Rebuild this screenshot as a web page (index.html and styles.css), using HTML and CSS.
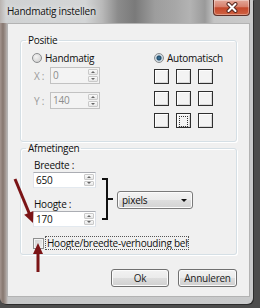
FILE: index.html
```html
<!DOCTYPE html>
<html lang="nl">
<head>
    <meta charset="UTF-8">
    <title>Handmatig instellen</title>
    <link rel="stylesheet" href="styles.css">
</head>
<body>
<div class="window">
    <div class="titlebar">
        <span class="title">Handmatig instellen</span>
        <span class="close">
            <svg width="12" height="11" viewBox="0 0 12 11">
                <path d="M2.5 2 L9.5 9 M9.5 2 L2.5 9" stroke="#5b2a22" stroke-width="4" stroke-linecap="round"/>
                <path d="M2.5 2 L9.5 9 M9.5 2 L2.5 9" stroke="#fff" stroke-width="2" stroke-linecap="round"/>
            </svg>
        </span>
    </div>
    <div class="client">
        <fieldset class="group">
            <legend>Positie</legend>
            <div class="pos">
                <div class="pos-left">
                    <div class="radio-row"><span class="radio"></span>Handmatig</div>
                    <div class="coord first">
                        <span class="coord-label">X :</span>
                        <div class="spin disabled xy">
                            <span class="spin-value">0</span>
                            <span class="spin-btns"><span class="up"></span><span class="down"></span></span>
                        </div>
                    </div>
                    <div class="coord">
                        <span class="coord-label">Y :</span>
                        <div class="spin disabled xy">
                            <span class="spin-value">140</span>
                            <span class="spin-btns"><span class="up"></span><span class="down"></span></span>
                        </div>
                    </div>
                </div>
                <div class="pos-right">
                    <div class="radio-row"><span class="radio checked"></span>Automatisch</div>
                    <div class="anchor-grid">
                        <span class="cell"></span><span class="cell"></span><span class="cell"></span>
                        <span class="cell"></span><span class="cell"></span><span class="cell"></span>
                        <span class="cell"></span><span class="cell focus"></span><span class="cell"></span>
                    </div>
                </div>
            </div>
        </fieldset>
        <fieldset class="group">
            <legend>Afmetingen</legend>
            <div class="size">
                <div class="size-row">
                    <div class="size-fields">
                        <div class="field-label">Breedte :</div>
                        <div class="spin wh">
                            <span class="spin-value">650</span>
                            <span class="spin-btns"><span class="up"></span><span class="down"></span></span>
                        </div>
                        <div class="field-label second">Hoogte :</div>
                        <div class="spin wh">
                            <span class="spin-value">170</span>
                            <span class="spin-btns"><span class="up"></span><span class="down"></span></span>
                        </div>
                    </div>
                    <div class="bracket"></div>
                    <div class="select">
                        <span>pixels</span>
                        <span class="select-arrow"></span>
                    </div>
                </div>
                <div class="check-row">
                    <span class="checkbox"></span>
                    <span class="check-text">Hoogte/breedte-verhouding behouden</span>
                </div>
            </div>
        </fieldset>
        <div class="buttons">
            <button type="button" class="btn ok">Ok</button>
            <button type="button" class="btn">Annuleren</button>
        </div>
    </div>
    <!-- rode pijlen over het dialoog -->
    <svg class="arrows" width="260" height="308" viewBox="0 0 260 308">
        <path d="M15 179 L29.5 214" stroke="#7b1416" stroke-width="3"/>
        <path d="M33 223 L33.4 210.9 L24.2 214.7 Z" fill="#7b1416"/>
        <path d="M38 272 L38 252" stroke="#7b1416" stroke-width="3"/>
        <path d="M38 243 L43 254 L33 254 Z" fill="#7b1416"/>
    </svg>
</div>
</body>
</html>
```

FILE: styles.css
```css
* {
    box-sizing: border-box;
}
body {
    margin: 0;
    width: 260px;
    height: 308px;
    overflow: hidden;
    background: #4c4c4c;
    font-family: "Open Sans", "Noto Sans", sans-serif;
    font-size: 10px;
    letter-spacing: -0.25px;
    color: #0e0e0e;
}
.window {
    position: relative;
    width: 253px;
    height: 304px;
    padding-bottom: 7px;
    display: flex;
    flex-direction: column;
    border-radius: 0 0 6px 6px;
    background: linear-gradient(90deg, #a4958f 0, #86776f 3px, #a89f9b 6px, #c6c7c8 8px, #c9cacb 100%);
    box-shadow: 1px 1px 0 #2c2c2c;
}
.titlebar {
    height: 23px;
    padding: 0 3px 0 7px;
    display: flex;
    justify-content: space-between;
    background: linear-gradient(90deg, #b9b3b0 0, #d0d2d3 6px, #d3d5d6 85px, #b9b9b9 102px, #8b8b8b 118px, #7a7a7a 135px, #9d9d9d 155px, #a7a7a7 175px, #b3b3b3 190px, #9a9a9a 205px, #c4c4c4 214px, #cbcbcb 100%);
}
.title {
    line-height: 23px;
    font-size: 10px;
    color: #111;
    text-shadow: 0 0 6px #fff;
}
.close {
    width: 37px;
    height: 16px;
    display: flex;
    align-items: center;
    justify-content: center;
    border: 1px solid #5e3028;
    border-top: 0;
    border-radius: 0 0 4px 4px;
    background: linear-gradient(#e3a899 0, #d7806c 45%, #c4482b 52%, #cf6242 100%);
    box-shadow: inset 0 0 0 1px rgba(255, 255, 255, 0.35);
}
.client {
    flex: 1;
    margin: 0 3px 0 7px;
    padding: 10px 12px 0 12px;
    background: #f0f0f0;
    border: 1px solid #b3b3b3;
}
.group {
    margin: 0;
    padding: 0;
    min-width: 0;
    border: 1px solid #d5dfe5;
    border-radius: 3px;
    box-shadow: inset 1px 1px 0 #fff, 1px 1px 0 #fff;
}
.group legend {
    margin-left: 5px;
    padding: 0 2px;
    line-height: 12px;
}
.pos {
    display: flex;
    padding: 4px 0 13px 11px;
}
.pos-left {
    width: 122px;
}
.radio-row {
    height: 15px;
    display: flex;
    align-items: center;
    gap: 3px;
}
.radio {
    width: 10px;
    height: 10px;
    border-radius: 50%;
    border: 1px solid #8a8c8e;
    background: radial-gradient(circle at 40% 35%, #f4f4f4 0, #d6d6d6 70%, #bfbfbf 100%);
}
.radio.checked {
    background: radial-gradient(circle, #3f7aa3 0, #1d4866 2px, #c8d6e0 3px, #e8e8e8 100%);
}
.coord {
    display: flex;
    align-items: center;
    margin-top: 8px;
}
.coord.first {
    margin-top: 2px;
}
.coord-label {
    width: 18px;
    padding-left: 2px;
    color: #9a9a9a;
}
.spin {
    display: flex;
    background: #fff;
    border: 1px solid #abadb3;
    border-color: #abadb3 #dbdfe6 #e3e9ef #e2e3ea;
}
.spin.xy {
    width: 50px;
    height: 17px;
}
.spin.wh {
    width: 63px;
    height: 16px;
}
.spin.disabled {
    background: #f3f3f3;
    border-color: #c2c2c2;
    color: #8c8c8c;
}
.spin-value {
    flex: 1;
    padding-left: 2px;
    line-height: 14px;
}
.spin-btns {
    width: 11px;
    padding: 1px 1px 1px 0;
    display: flex;
    flex-direction: column;
    gap: 1px;
}
.spin-btns span {
    flex: 1;
    display: flex;
    align-items: center;
    justify-content: center;
    border: 1px solid #c9c9c9;
    border-radius: 1px;
    background: linear-gradient(#fafafa, #e6e6e6);
}
.spin-btns span::after {
    content: "";
    border-left: 2px solid transparent;
    border-right: 2px solid transparent;
}
.spin-btns .up::after {
    border-bottom: 2px solid #666;
}
.spin-btns .down::after {
    border-top: 2px solid #666;
}
.anchor-grid {
    margin-top: 4px;
    display: grid;
    grid-template-columns: repeat(3, 15px);
    grid-auto-rows: 15px;
    gap: 7px;
}
.cell {
    border: 1px solid #2f2f2f;
    background: #f3f3f3;
    box-shadow: inset 1px 1px 0 #fdfdfd, inset -1px -1px 0 #d8d8d8;
}
.cell.focus {
    padding: 2px;
}
.cell.focus::after {
    content: "";
    display: block;
    height: 100%;
    border: 1px dotted #333;
}
.size {
    padding: 4px 0 4px 12px;
}
.size-row {
    display: flex;
    align-items: flex-start;
}
.field-label {
    height: 14px;
    line-height: 14px;
    padding-left: 1px;
}
.field-label.second {
    margin-top: 9px;
}
.bracket {
    position: relative;
    width: 6px;
    height: 42px;
    margin: 20px 0 0 6px;
    border: 2px solid #111;
    border-left: 0;
}
.bracket::after {
    content: "";
    position: absolute;
    left: 4px;
    top: 18px;
    width: 7px;
    height: 2px;
    background: #111;
}
.select {
    width: 76px;
    height: 18px;
    margin: 33px 0 0 9px;
    padding: 0 5px 0 4px;
    display: flex;
    align-items: center;
    justify-content: space-between;
    border: 1px solid #7a7a7a;
    border-radius: 3px;
    background: linear-gradient(#f3f3f3 0, #ebebeb 50%, #dedede 51%, #d3d3d3 100%);
    box-shadow: inset 0 0 0 1px #fbfbfb;
}
.select-arrow {
    border-left: 3px solid transparent;
    border-right: 3px solid transparent;
    border-top: 3px solid #111;
}
.check-row {
    margin-top: 9px;
    display: flex;
    align-items: center;
    gap: 1px;
}
.checkbox {
    width: 11px;
    height: 11px;
    border: 1px solid #8e8f8f;
    background: linear-gradient(135deg, #cfcfcf, #f2f2f2);
    box-shadow: inset 0 0 0 1px #f4f4f4;
}
.check-text {
    width: 144px;
    height: 14px;
    padding: 0 1px;
    overflow: hidden;
    white-space: nowrap;
    line-height: 12px;
    border: 1px dotted #555;
}
.buttons {
    display: flex;
    justify-content: flex-end;
    gap: 9px;
    margin-top: 14px;
}
.btn {
    width: 59px;
    height: 18px;
    padding: 0;
    border: 1px solid #707070;
    border-radius: 3px;
    background: linear-gradient(#f2f2f2 0, #ebebeb 50%, #dddddd 51%, #cfcfcf 100%);
    box-shadow: inset 0 0 0 1px #fbfbfb;
    font-family: inherit;
    font-size: 10px;
    letter-spacing: -0.25px;
    color: #222;
}
.btn.ok {
    width: 58px;
}
.arrows {
    position: absolute;
    left: 0;
    top: 0;
    pointer-events: none;
}
```
